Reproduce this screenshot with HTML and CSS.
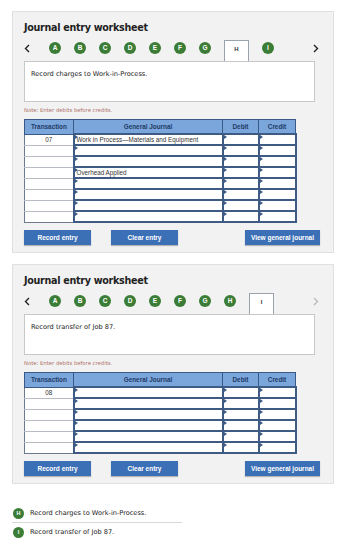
FILE: index.html
```html
<!DOCTYPE html>
<html>
<head>
<meta charset="utf-8">
<link rel="stylesheet" href="styles.css">
</head>
<body>
<section class="panel">
  <h2 class="title">Journal entry worksheet</h2>
  <div class="nav">
    <span class="chev"><svg width="6" height="9" viewBox="0 0 6 9"><path d="M5 1 L1.5 4.5 L5 8" fill="none" stroke="#222" stroke-width="1.4"/></svg></span>
    <span class="dot">A</span><span class="dot">B</span><span class="dot">C</span><span class="dot">D</span><span class="dot">E</span><span class="dot">F</span><span class="dot">G</span>
    <span class="tab">H</span>
    <span class="dot">I</span>
    <span class="chev right"><svg width="6" height="9" viewBox="0 0 6 9"><path d="M1 1 L4.5 4.5 L1 8" fill="none" stroke="#222" stroke-width="1.4"/></svg></span>
  </div>
  <div class="textbox">Record charges to Work-in-Process.</div>
  <p class="note">Note: Enter debits before credits.</p>
  <table class="jt">
    <colgroup><col class="c1"><col class="c2"><col class="c3"><col class="c4"></colgroup>
    <thead><tr><th>Transaction</th><th>General Journal</th><th>Debit</th><th>Credit</th></tr></thead>
    <tbody>
      <tr><td class="tx">07</td><td class="in">Work in Process—Materials and Equipment</td><td class="in"></td><td class="in"></td></tr>
      <tr><td class="tx"></td><td class="in"></td><td class="in"></td><td class="in"></td></tr>
      <tr><td class="tx"></td><td class="in"></td><td class="in"></td><td class="in"></td></tr>
      <tr><td class="tx"></td><td class="in">Overhead Applied</td><td class="in"></td><td class="in"></td></tr>
      <tr><td class="tx"></td><td class="in"></td><td class="in"></td><td class="in"></td></tr>
      <tr><td class="tx"></td><td class="in"></td><td class="in"></td><td class="in"></td></tr>
      <tr><td class="tx"></td><td class="in"></td><td class="in"></td><td class="in"></td></tr>
      <tr><td class="tx"></td><td class="in"></td><td class="in"></td><td class="in"></td></tr>
    </tbody>
  </table>
  <div class="btns">
    <button class="btn b1">Record entry</button>
    <button class="btn b2">Clear entry</button>
    <button class="btn b3">View general journal</button>
  </div>
</section>

<section class="panel">
  <h2 class="title">Journal entry worksheet</h2>
  <div class="nav">
    <span class="chev"><svg width="6" height="9" viewBox="0 0 6 9"><path d="M5 1 L1.5 4.5 L5 8" fill="none" stroke="#222" stroke-width="1.4"/></svg></span>
    <span class="dot">A</span><span class="dot">B</span><span class="dot">C</span><span class="dot">D</span><span class="dot">E</span><span class="dot">F</span><span class="dot">G</span><span class="dot">H</span>
    <span class="tab">I</span>
    <span class="chev right"><svg width="6" height="9" viewBox="0 0 6 9"><path d="M1 1 L4.5 4.5 L1 8" fill="none" stroke="#bbb" stroke-width="1.4"/></svg></span>
  </div>
  <div class="textbox">Record transfer of Job 87.</div>
  <p class="note">Note: Enter debits before credits.</p>
  <table class="jt">
    <colgroup><col class="c1"><col class="c2"><col class="c3"><col class="c4"></colgroup>
    <thead><tr><th>Transaction</th><th>General Journal</th><th>Debit</th><th>Credit</th></tr></thead>
    <tbody>
      <tr><td class="tx">08</td><td class="in"></td><td class="in"></td><td class="in"></td></tr>
      <tr><td class="tx"></td><td class="in"></td><td class="in"></td><td class="in"></td></tr>
      <tr><td class="tx"></td><td class="in"></td><td class="in"></td><td class="in"></td></tr>
      <tr><td class="tx"></td><td class="in"></td><td class="in"></td><td class="in"></td></tr>
      <tr><td class="tx"></td><td class="in"></td><td class="in"></td><td class="in"></td></tr>
      <tr><td class="tx"></td><td class="in"></td><td class="in"></td><td class="in"></td></tr>
    </tbody>
  </table>
  <div class="btns">
    <button class="btn b1">Record entry</button>
    <button class="btn b2">Clear entry</button>
    <button class="btn b3">View general journal</button>
  </div>
</section>

<ul class="summary">
  <li class="sitem first"><span class="dot small">H</span>Record charges to Work-in-Process.</li>
  <li class="sitem"><span class="dot small">I</span>Record transfer of Job 87.</li>
</ul>
</body>
</html>
```

FILE: styles.css
```css
html, body { margin: 0; padding: 0; background: #fff; }
body { font-family: "DejaVu Sans", Verdana, sans-serif; color: #222; }

.panel {
  margin: 11px 0 0 12px;
  box-sizing: border-box;
  width: 322px;
  background: #f2f2f2;
  border: 1px solid #e0e0e0;
  padding: 9px 11px 7px 11px;
}
.panel + .panel { margin-top: 11px; }

.title {
  margin: 0;
  font-size: 9.6px;
  font-weight: bold;
  line-height: 14px;
  color: #222;
  letter-spacing: -0.3px;
}

.nav {
  display: flex;
  align-items: flex-start;
  gap: 13px;
  height: 21px;
  margin-top: 5px;
}
.chev { width: 12px; height: 14px; display: flex; align-items: center; justify-content: flex-start; padding-top: 1px; }
.chev.right { margin-left: auto; justify-content: center; }

.dot {
  width: 12px; height: 12px; border-radius: 50%;
  background: #3b7d37;
  color: #fff;
  font-family: "Liberation Sans", Arial, sans-serif;
  font-weight: bold;
  font-size: 6.5px;
  line-height: 12px;
  text-align: center;
  flex: none;
  margin-top: 2px;
}

.tab {
  width: 25px; height: 21px;
  box-sizing: border-box;
  border: 1px solid #9aa3ad;
  border-bottom: none;
  background: #fff;
  font-family: "Liberation Sans", Arial, sans-serif;
  font-size: 6px;
  font-weight: bold;
  text-align: center;
  line-height: 14px;
  padding-top: 1px;
  color: #333;
  flex: none;
}

.textbox {
  width: 291px; height: 41px;
  box-sizing: border-box;
  background: #fff;
  border: 1px solid #c8c8c8;
  padding: 8px 6px;
  font-size: 6.6px;
  line-height: 8px;
  color: #222;
}

.note {
  margin: 4px 0 0 0;
  font-size: 5.3px;
  line-height: 8px;
  color: #b0706a;
}

.jt {
  margin-top: 5px;
  width: 271px;
  table-layout: fixed;
  border-collapse: collapse;
  font-family: "Liberation Sans", Arial, sans-serif;
}
.c1 { width: 49px; }
.c2 { width: 149px; }
.c3 { width: 36px; }
.c4 { width: 37px; }

.jt th {
  height: 13px;
  padding: 0;
  background: #7aa6db;
  border: 1px solid #3a5a86;
  font-size: 6.4px;
  font-weight: bold;
  color: #1f3a66;
  line-height: 10px;
}
.jt td {
  height: 11px;
  padding: 0;
  box-sizing: border-box;
  background: #fff;
  font-size: 6.3px;
  line-height: 8px;
  color: #333;
  white-space: nowrap;
  overflow: hidden;
}
.jt td.tx {
  border: 1px solid #b7bcc4;
  border-left: 1px solid #6b7a8e;
  text-align: center;
}
.jt tbody tr:last-child td.tx { border-bottom-color: #6b7a8e; }
.jt td.in {
  border: 2px solid #3d5b85;
  position: relative;
  padding-left: 2px;
  text-align: left;
}
.jt td.in::before {
  content: "";
  position: absolute;
  left: 0; top: 0;
  border-top: 2px solid transparent;
  border-bottom: 2px solid transparent;
  border-left: 3px solid #3d5b85;
}

.btns {
  display: flex;
  margin-top: 7px;
  width: 296px;
}
.btn {
  height: 15px;
  padding: 0;
  border: none;
  background: #3b6fb6;
  color: #fff;
  font-family: "Liberation Sans", Arial, sans-serif;
  font-weight: bold;
  font-size: 6.5px;
  box-shadow: 0 1px 1px rgba(0,0,0,0.25);
}
.b1 { width: 67px; }
.b2 { width: 67px; margin-left: 20px; }
.b3 { width: 75px; margin-left: auto; }

.summary {
  list-style: none;
  margin: 23px 0 0 12px;
  padding: 0;
  width: 170px;
}
.sitem {
  display: flex;
  align-items: center;
  gap: 6px;
  font-size: 6.6px;
  line-height: 12px;
  color: #222;
}
.sitem.first { border-bottom: 1px solid #d8d8d8; padding-bottom: 3px; }
.sitem + .sitem { padding-top: 3px; }
.dot.small { width: 11px; height: 11px; line-height: 11px; margin-top: 0; font-size: 5.5px; margin-left: 1px; }
```
